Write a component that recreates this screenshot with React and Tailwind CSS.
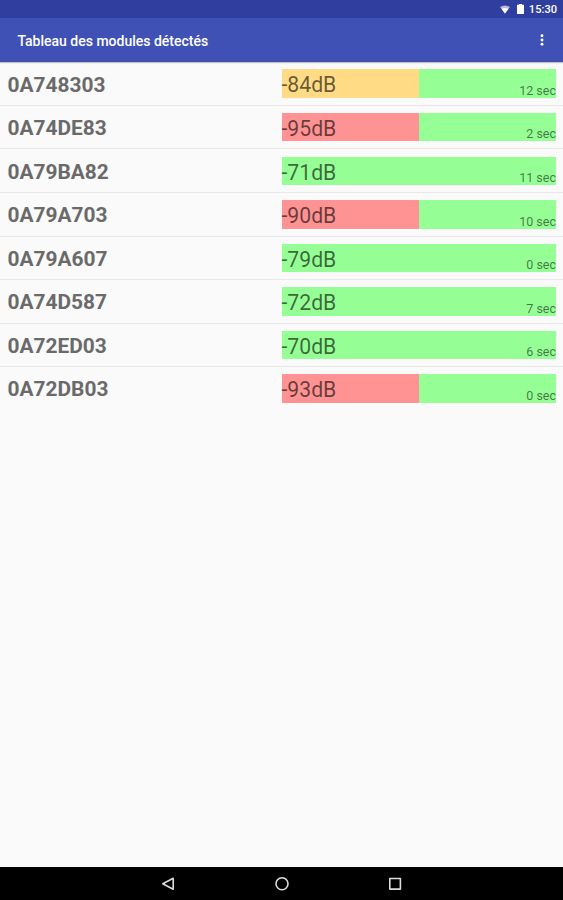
const rows = [
  ['0A748303', '-84dB', '12 sec', 'bg-[#ffdb86]'],
  ['0A74DE83', '-95dB', '2 sec', 'bg-[#ff9393]'],
  ['0A79BA82', '-71dB', '11 sec', 'bg-[#95ff95]'],
  ['0A79A703', '-90dB', '10 sec', 'bg-[#ff9393]'],
  ['0A79A607', '-79dB', '0 sec', 'bg-[#95ff95]'],
  ['0A74D587', '-72dB', '7 sec', 'bg-[#95ff95]'],
  ['0A72ED03', '-70dB', '6 sec', 'bg-[#95ff95]'],
  ['0A72DB03', '-93dB', '0 sec', 'bg-[#ff9393]'],
];

function Row({ id, level, age, tone, last }) {
  return (
    <div className={`flex h-[43.55px] items-center pr-[7px] pl-[7.5px] ${last ? 'pb-px' : 'border-b border-[#e8e8e8]'}`}>
      <div className="w-[274px] pt-[2px] text-[20.9px] leading-7 font-bold text-[#6a6a6a]">{id}</div>
      <div className={`h-[28.5px] w-[137px] text-[21.2px] leading-[31px] text-black/60 ${tone}`}>{level}</div>
      <div className="flex h-[28.5px] flex-1 items-end justify-end bg-[#95ff95] text-[12.5px] leading-[15px] text-black/55">{age}</div>
    </div>
  );
}

export default function App() {
  return (
    <div className="flex h-[900px] w-[563px] flex-col overflow-hidden bg-[#fafafa] font-[Roboto,sans-serif]">
      <div className="flex h-[18px] items-center justify-end bg-[#303f9f] pr-[6px] text-white">
        <svg width="10" height="9" viewBox="0 0 10 9" fill="currentColor"><path opacity=".65" d="M0 2Q5-1 10 2L5 8.5Z" /><path d="M1.5 3.8Q5 2 8.5 3.8L5 8.5Z" /></svg>
        <svg className="ml-[7px]" width="7" height="10" viewBox="0 0 7 10" fill="currentColor"><path d="M0 .7h2V0h3v.7h2V10H0Z" /></svg>
        <span className="ml-[5px] pt-px text-[11.1px] leading-[17px] font-medium">15:30</span>
      </div>
      <div className="relative flex h-[44px] items-center justify-between bg-[#3f51b5] pr-[19px] pl-[17.4px] text-white shadow-[0_1px_1px_rgba(0,0,0,0.22)]">
        <span className="pt-[2px] text-[14px] font-medium">Tableau des modules détectés</span>
        <svg width="4" height="12" viewBox="0 0 4 12" fill="currentColor"><circle cx="2" cy="1.8" r="1.45" /><circle cx="2" cy="6" r="1.45" /><circle cx="2" cy="10.2" r="1.45" /></svg>
      </div>
      <div className="flex-1 pt-[0.4px]">
        {rows.map(([id, level, age, tone], i) => (
          <Row key={id} id={id} level={level} age={age} tone={tone} last={i === rows.length - 1} />
        ))}
      </div>
      <div className="flex h-[33px] items-center justify-center gap-[99.5px] bg-black text-[#dcdcdc]">
        <svg width="14" height="14" viewBox="0 0 14 14" fill="none" stroke="currentColor" strokeWidth="1.6" strokeLinejoin="round"><path d="M12.2 1.3v11L1.8 6.8Z" /></svg>
        <svg width="14" height="14" viewBox="0 0 14 14" fill="none" stroke="currentColor" strokeWidth="1.6"><circle cx="7" cy="6.8" r="6" /></svg>
        <svg width="14" height="14" viewBox="0 0 14 14" fill="none" stroke="currentColor" strokeWidth="1.6" strokeLinejoin="round"><path d="M1.8 1.5h10.6v10.6H1.8Z" /></svg>
      </div>
    </div>
  );
}
